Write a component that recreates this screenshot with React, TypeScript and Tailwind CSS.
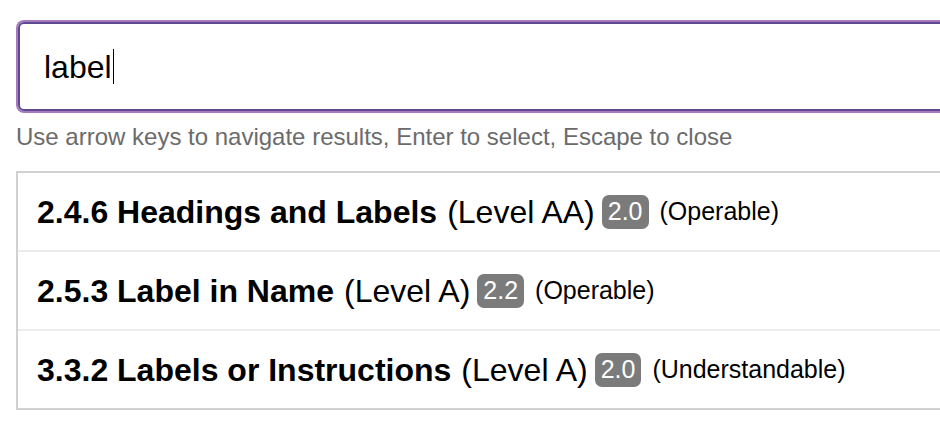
const results = [
  { id: '2.4.6', title: 'Headings and Labels', level: 'AA', version: '2.0', principle: 'Operable' },
  { id: '2.5.3', title: 'Label in Name', level: 'A', version: '2.2', principle: 'Operable' },
  { id: '3.3.2', title: 'Labels or Instructions', level: 'A', version: '2.0', principle: 'Understandable' },
]

export default function App() {
  return (
    <div
      className="w-[940px] h-[448px] overflow-hidden bg-white text-black"
      style={{ fontFamily: '"Liberation Sans", Arial, sans-serif' }}
    >
      {/* Search box */}
      <div className="mt-[22px] ml-[18px] w-[1000px] h-[89px] flex items-center border-2 border-[#5d4893] rounded-[6px] shadow-[0_0_0_2px_#a67abd] pl-[24px]">
        <span className="text-[32px] leading-[36px]">label</span>
        <span className="ml-[1px] w-px h-[35px] bg-black" />
      </div>

      {/* Help text */}
      <p className="mt-[12px] ml-4 text-[24px] leading-[28px] text-[#6b6b6b] whitespace-nowrap">
        Use arrow keys to navigate results, Enter to select, Escape to close
      </p>

      {/* Results */}
      <ul className="mt-[20px] ml-4 w-[1000px] border-2 border-[#d1d1d1]">
        {results.map((r, i) => (
          <li
            key={r.id}
            className={`flex items-center pl-[19px] whitespace-nowrap ${i > 0 ? 'h-[79px] border-t-2 border-[#ececec]' : 'h-[77px]'}`}
          >
            <span className="text-[32px] font-bold">{r.id} {r.title}</span>
            <span className="text-[32px] ml-[10px]">(Level {r.level})</span>
            <span className="ml-[7px] h-[34px] px-[6px] flex items-center rounded-[7px] bg-[#7b7b7b] text-white text-[25px]">
              {r.version}
            </span>
            <span className="ml-[11px] text-[25px]">({r.principle})</span>
          </li>
        ))}
      </ul>
    </div>
  )
}
